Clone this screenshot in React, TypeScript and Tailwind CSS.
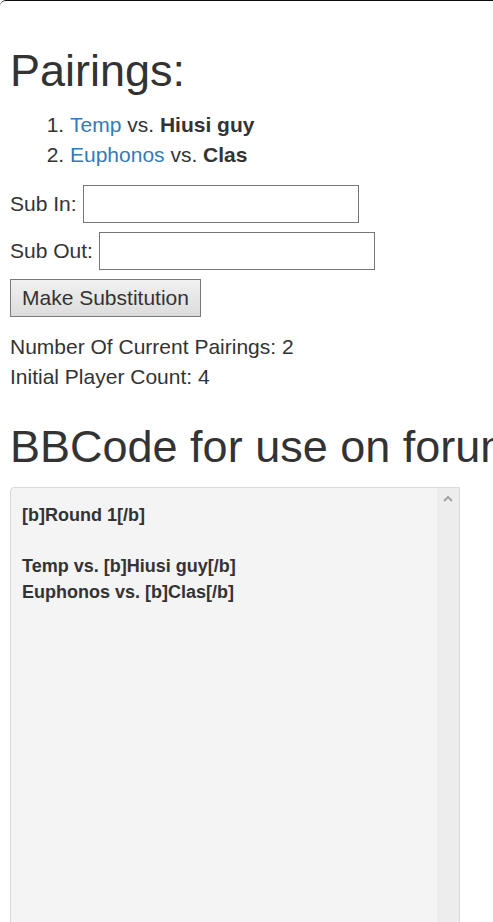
export default function App() {
  const bbcode = "[b]Round 1[/b]\n\nTemp vs. [b]Hiusi guy[/b]\nEuphonos vs. [b]Clas[/b]";

  return (
    <div className="h-screen w-full overflow-hidden rounded-tl-[6px] border-t border-[#0b0b12] bg-white font-['Liberation_Sans',Arial,sans-serif] text-[21px] leading-[30px] text-[#333]">
      <div className="px-[10px] pt-[45px]">
        <h2 className="mb-[14px] text-[45px] font-normal leading-[49.5px]">Pairings:</h2>
        <ol className="mb-[15px] list-decimal pl-[60px]">
          <li>
            <a href="#" className="text-[#337ab7]">Temp</a> vs. <b>Hiusi guy</b>
          </li>
          <li>
            <a href="#" className="text-[#337ab7]">Euphonos</a> vs. <b>Clas</b>
          </li>
        </ol>

        <div className="flex flex-col items-start gap-[9px]">
          <label className="flex items-center gap-[6px]">
            Sub In:
            <input type="text" className="h-[38px] w-[276px] border border-[#767676] bg-white px-1" />
          </label>
          <label className="flex items-center gap-[6px]">
            Sub Out:
            <input type="text" className="h-[38px] w-[276px] border border-[#767676] bg-white px-1" />
          </label>
          <button className="h-[38px] border border-[#7a7a7a] bg-gradient-to-b from-[#f1f1f1] to-[#dcdcdc] px-[11px] text-[21px] text-[#333]">
            Make Substitution
          </button>
        </div>

        <div className="mt-[15px]">
          <div>Number Of Current Pairings: 2</div>
          <div>Initial Player Count: 4</div>
        </div>

        <h2 className="mb-[16px] mt-[30px] whitespace-nowrap text-[45px] font-normal leading-[49.5px]">
          BBCode for use on forums
        </h2>

        <div className="flex h-[480px] w-[450px] rounded-tl-[4px] border border-[#d9d9d9] bg-[#f4f4f4]">
          <div className="flex-1 whitespace-pre-wrap pl-[11px] pt-[15px] text-[18px] font-bold leading-[25.7px] text-[#333]">
            {bbcode}
          </div>
          <div className="flex w-[22px] justify-center bg-[#ededed] pt-[8px]">
            <svg width="10" height="6" viewBox="0 0 10 6">
              <path d="M1 5 L5 1 L9 5" fill="none" stroke="#a3a3a3" strokeWidth="2" />
            </svg>
          </div>
        </div>
      </div>
    </div>
  );
}
